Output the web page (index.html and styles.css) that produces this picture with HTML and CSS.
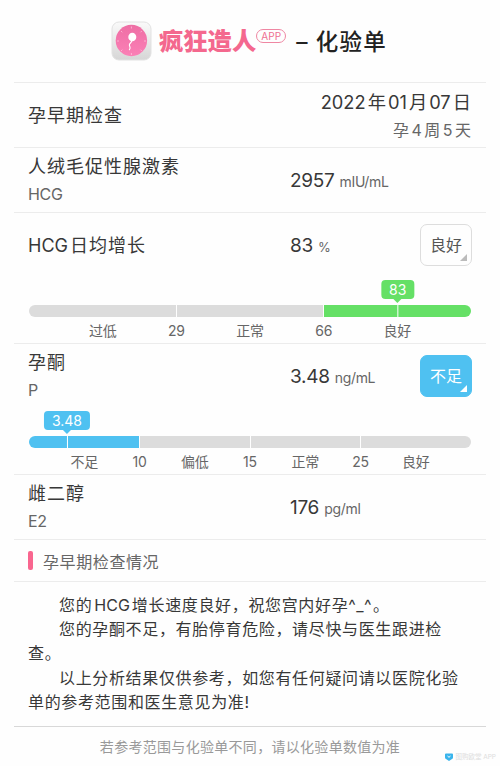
FILE: index.html
```
<!DOCTYPE html>
<html lang="zh-CN">
<head>
  <meta charset="UTF-8">
  <meta name="viewport" content="width=device-width, initial-scale=1.0">
  <title>化验单</title>
  <link rel="stylesheet" href="styles.css">
</head>

<body>
  <div class="container">
    <header class="header">
      <svg class="logo" viewBox="0 0 44 44">
        <defs>
          <linearGradient id="frame" x1="0" y1="0" x2="0" y2="1">
            <stop offset="0" stop-color="#fafafa"/>
            <stop offset="1" stop-color="#d6d6d6"/>
          </linearGradient>
          <linearGradient id="disc" x1="0" y1="0" x2="0" y2="1">
            <stop offset="0" stop-color="#ee6ea4"/>
            <stop offset="1" stop-color="#fb80b6"/>
          </linearGradient>
        </defs>
        <rect x="3" y="3" width="39" height="38" rx="7" fill="url(#frame)" stroke="#e2e2e2"/>
        <circle cx="22.4" cy="21.500" r="15.7" fill="url(#disc)"/>
        <path d="M22.4 7.5v2M22.4 34v2M8 22h2M35 22h2M12 12l1.300 1.300M32.800 12l-1.300 1.300M12 32l1.300-1.300M32.800 32l-1.300-1.300" stroke="#ffc0da" stroke-width=".8"/>
        <ellipse cx="23.300" cy="18" rx="4" ry="4.300" fill="#fff"/>
        <path d="M22.800 22c-.5 2-3 2.500-2.400 4.500s1.500 2 0 4.200" fill="none" stroke="#fff" stroke-width="1.100" stroke-linecap="round"/>
      </svg>
      <span class="brand">疯狂造人</span>
      <span class="app">APP</span>
      <h1>– 化验单</h1>
    </header>

    <section class="row">
      <div class="name">孕早期检查</div>
      <div class="date">
        <div>2022<i></i>年<i></i>01<i></i>月<i></i>07<i></i>日</div>
        <div class="week">孕<i></i>4<i></i>周<i></i>5<i></i>天</div>
      </div>
    </section>

    <section class="row">
      <div class="name">人绒毛促性腺激素<small>HCG</small></div>
      <div class="value">2957 <span>mIU/mL</span></div>
    </section>

    <section class="row-scale">
      <div class="row">
        <div class="name"><b>HCG</b><i></i>日均增长</div>
        <div class="value">83 <span class="percent">%</span></div>
        <div class="status">良好</div>
      </div>
      <div class="bar good">
        <span></span><span></span><span class="on"></span>
        <div class="marker" style="left: 83.4%">83</div>
      </div>
      <div class="labels three">
        <span>过低</span><span>29</span><span>正常</span><span>66</span><span>良好</span>
      </div>
    </section>

    <section class="row-scale">
      <div class="row">
        <div class="name">孕酮<small>P</small></div>
        <div class="value">3.48 <span>ng/mL</span></div>
        <div class="status low">不足</div>
      </div>
      <div class="bar low">
        <span class="on"></span><span></span><span></span><span></span>
        <div class="marker" style="left: 8.6%">3.48</div>
      </div>
      <div class="labels four">
        <span>不足</span><span>10</span><span>偏低</span><span>15</span><span>正常</span><span>25</span><span>良好</span>
      </div>
    </section>

    <section class="row">
      <div class="name">雌二醇<small>E2</small></div>
      <div class="value">176 <span>pg/ml</span></div>
    </section>

    <h2>孕早期检查情况</h2>

    <div class="result">
      <p>您的<i></i><b>HCG</b><i></i>增长速度良好，祝您宫内好孕<span class="face">^_^</span>。</p>
      <p>您的孕酮不足，有胎停育危险，请尽快与医生跟进检查。</p>
      <p>以上分析结果仅供参考，如您有任何疑问请以医院化验单的参考范围和医生意见为准!</p>
    </div>

    <footer>若参考范围与化验单不同，请以化验单数值为准</footer>
  </div>

  <div class="watermark">
    <svg viewBox="0 0 8 8"><path d="M1 .5h6q1 0 1 1v3q0 1-1 1.500L4 8 1 6Q0 5.500 0 4.500v-3q0-1 1-1z" fill="#39b4ec"/><path d="M2.500 3l1.500 1.300L5.500 3" fill="none" stroke="#fff"/></svg>
    <span>图购欧堂 APP</span>
  </div>
</body>
</html>
```
FILE: styles.css
```
* {
  box-sizing: border-box;
}

body {
  margin: 0;
  background: #fefefe;
  color: #383838;
  font-family: Inter, "Noto Sans CJK SC", sans-serif;
  font-size: 18px;
}

i {
  display: inline-block;
  width: 2px;
}

b {
  font-weight: 400;
  letter-spacing: 0;
}

.container {
  width: 472px;
  margin: 0 auto;
}

.header {
  display: flex;
  align-items: center;
  height: 82px;
  padding-left: 95px;
}

.logo {
  width: 44px;
  height: 44px;
}

.brand {
  margin-left: 6px;
  color: #f4688e;
  font-size: 24.3px;
  font-weight: 900;
  line-height: 32px;
  white-space: nowrap;
}

.app {
  width: 30px;
  height: 14px;
  margin: -11px 0 0 0;
  border: 1px solid #ef87a3;
  border-radius: 7px;
  color: #ef6f91;
  font-size: 10px;
  line-height: 12px;
  text-align: center;
}

h1 {
  margin: -3px 0 0 10px;
  color: #222;
  font-size: 22.5px;
  font-weight: 500;
  letter-spacing: 1.2px;
  white-space: nowrap;
}

.row {
  display: flex;
  align-items: center;
  height: 65px;
  padding: 0 15px 0 14px;
  border-top: 1px solid #ececec;
}

.name {
  width: 262px;
  padding-top: 1px;
  line-height: 28px;
  letter-spacing: 1px;
}

.name small {
  display: block;
  color: #666;
  font-size: 16px;
  line-height: 27px;
  letter-spacing: -0.3px;
}

.date {
  flex: 1;
  padding-top: 2px;
  font-size: 18.3px;
  line-height: 28px;
  text-align: right;
  white-space: nowrap;
}

.week {
  color: #666;
  font-size: 16px;
}

.week i {
  width: 2.500px;
}

.value {
  flex: 1;
  font-size: 19px;
  letter-spacing: -0.3px;
}

.value span {
  color: #666;
  font-size: 14px;
}

.value .percent {
  font-size: 13px;
}

.status {
  position: relative;
  width: 52px;
  height: 42px;
  margin-right: -1px;
  border: 1px solid #ddd;
  border-radius: 7px;
  color: #555;
  font-size: 16px;
  line-height: 40px;
  text-align: center;
}

.status::after {
  content: '';
  position: absolute;
  right: 4px;
  bottom: 4px;
  border-left: 7px solid transparent;
  border-bottom: 7px solid #bbb;
}

.status.low {
  border-color: #4fc1f1;
  background: #4fc1f1;
  color: #fff;
}

.status.low::after {
  border-bottom-color: #fff;
}

.row-scale {
  height: 131px;
}

.bar {
  position: relative;
  display: flex;
  gap: 1px;
  height: 12px;
  margin: 28px 15px 0;
}

.bar span {
  flex: 1;
  background: #dcdcdc;
}

.bar span:first-child {
  border-radius: 6px 0 0 6px;
}

.bar span:nth-last-child(2) {
  border-radius: 0 6px 6px 0;
}

.bar.good .on,
.bar.good .marker {
  background: #65e066;
}

.bar.low .on,
.bar.low .marker {
  background: #4fc1f1;
}

.marker {
  position: absolute;
  top: -25px;
  padding: 0 8px;
  border-radius: 4px;
  color: #fff;
  font-size: 14px;
  line-height: 19px;
  transform: translateX(-50%);
}

/* arrow */
.marker::before {
  content: '';
  position: absolute;
  left: 50%;
  top: 19px;
  margin-left: -4px;
  border: 4px solid transparent;
  border-top: 4px solid #65e066;
  border-bottom: 0;
}

.low .marker::before {
  border-top-color: #4fc1f1;
}

/* tick on the bar */
.marker::after {
  content: '';
  position: absolute;
  left: 50%;
  top: 25px;
  width: 1px;
  height: 12px;
  background: #fff;
}

.labels {
  display: flex;
  justify-content: center;
  margin: 3px 15px 0;
  color: #666;
  font-size: 14px;
  line-height: 22px;
  letter-spacing: -0.2px;
  text-align: center;
}

.labels.three span {
  width: 16.667%;
}

.labels.four span {
  width: 12.5%;
}

h2 {
  display: flex;
  align-items: center;
  height: 42px;
  margin: 0;
  padding-left: 14px;
  border-top: 1px solid #ececec;
  color: #666;
  font-size: 16px;
  font-weight: 400;
  letter-spacing: 0.6px;
}

h2::before {
  content: '';
  width: 5px;
  height: 19px;
  margin-right: 10px;
  border-radius: 2px;
  background: #f9668f;
}

.result {
  height: 145px;
  padding: 11px 14px 0;
  border-top: 1px solid #ececec;
  font-size: 16px;
  letter-spacing: 0.65px;
  line-height: 24.2px;
}

.result p {
  margin: 0;
  text-indent: 31px;
}

.face {
  letter-spacing: 1.5px;
}

footer {
  border-top: 1px solid #d8d8d8;
  color: #999;
  font-size: 14px;
  letter-spacing: 0.3px;
  line-height: 40px;
  text-align: center;
}

.watermark {
  position: absolute;
  right: 4px;
  bottom: 4px;
  display: flex;
  align-items: center;
  gap: 2px;
  color: #ddd;
  font-size: 6.5px;
  line-height: 10px;
}

.watermark svg {
  width: 8px;
  height: 8px;
}
```
